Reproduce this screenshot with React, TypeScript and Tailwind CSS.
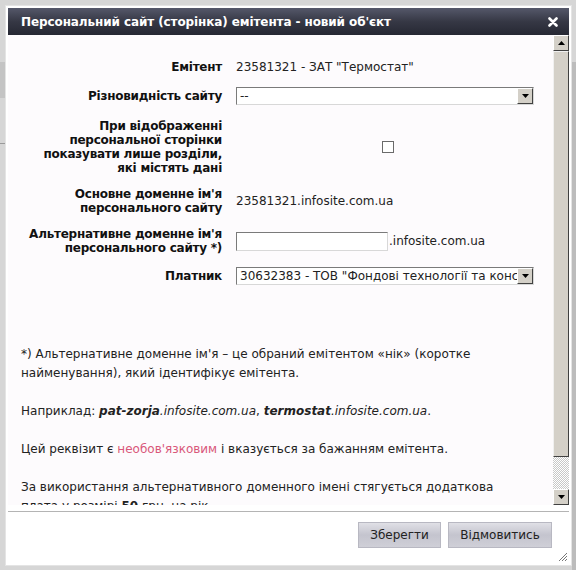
import React from 'react';

function SelectBox({ value, width }: { value: string; width: string }) {
  return (
    <div className={`${width} h-[18px] flex bg-white border border-[#7a7a7a] border-r-[#d8d8d8] border-b-[#d8d8d8]`}>
      <div className="flex-1 overflow-hidden whitespace-nowrap pl-[3px] text-[12px] leading-[16px] text-[#222]">{value}</div>
      <div className="w-[16px] h-[16px] bg-[#d4d0c8] border border-t-white border-l-white border-r-[#404040] border-b-[#404040] flex items-center justify-center">
        <svg width="7" height="4" viewBox="0 0 7 4"><path d="M0 0h7L3.5 4z" fill="#000" /></svg>
      </div>
    </div>
  );
}

function ScrollButton({ up }: { up?: boolean }) {
  return (
    <div className="w-[16px] h-[16px] bg-[#d4d0c8] border border-t-white border-l-white border-r-[#404040] border-b-[#404040] flex items-center justify-center shrink-0">
      <svg width="7" height="4" viewBox="0 0 7 4">
        <path d={up ? 'M0 4h7L3.5 0z' : 'M0 0h7L3.5 4z'} fill="#000" />
      </svg>
    </div>
  );
}

function FormRow({ label, children, className = '' }: { label: React.ReactNode; children: React.ReactNode; className?: string }) {
  return (
    <div className={`flex items-center ${className}`}>
      <div className="w-[214px] shrink-0 text-right font-bold text-[12px] leading-[14px] tracking-[-0.25px] text-[#111]">{label}</div>
      <div className="ml-[14px] flex-1 flex items-center text-[12px] text-[#222]">{children}</div>
    </div>
  );
}

export default function App() {
  return (
    <div className="w-[576px] h-[570px] bg-[#d6d6d6] overflow-hidden flex font-['DejaVu_Sans',sans-serif]">
      {/* page behind the dialog */}
      <div className="w-[5px] shrink-0 flex flex-col overflow-hidden">
        <div className="h-[62px]" />
        <div className="h-[36px] bg-[#c4c4c4]" />
        <div className="h-[46px] border-b border-[#9a9a9a]" />
      </div>

      <div className="mt-[5px] w-[567px] h-[561px] shrink-0 bg-white border border-[#e4e4e4] p-[2px] flex flex-col">
        {/* title bar */}
        <div className="h-[27px] shrink-0 flex items-center justify-between pl-[13px] pr-[11px] bg-gradient-to-b from-[#55586a] via-[#363845] to-[#262833]">
          <span className="text-white font-bold text-[12px] tracking-[-0.1px]">Персональний сайт (сторінка) емітента - новий об'єкт</span>
          <svg width="10" height="10" viewBox="0 0 10 10">
            <path d="M1.5 1.5l7 7M8.5 1.5l-7 7" stroke="#fff" strokeWidth="2.6" strokeLinecap="round" />
          </svg>
        </div>

        {/* scroll body */}
        <div className="h-[470px] shrink-0 flex">
          <div className="flex-1 overflow-hidden bg-[#fdfbfd]">
            <div className="pt-[23px]">
              <FormRow label="Емітент" className="h-[18px]">
                23581321 - ЗАТ "Термостат"
              </FormRow>
              <FormRow label="Різновидність сайту" className="mt-[11px] h-[18px]">
                <SelectBox value="--" width="w-[298px]" />
              </FormRow>
              <FormRow
                className="mt-[14px]"
                label={
                  <>
                    При відображенні
                    <br />
                    персональної сторінки
                    <br />
                    показувати лише розділи,
                    <br />
                    які містять дані
                  </>
                }
              >
                <div className="ml-[146px] w-[12px] h-[12px] bg-white border border-[#6a6a6a]" />
              </FormRow>
              <FormRow
                className="mt-[12px]"
                label={
                  <>
                    Основне доменне ім'я
                    <br />
                    персонального сайту
                  </>
                }
              >
                23581321.infosite.com.ua
              </FormRow>
              <FormRow
                className="mt-[12px]"
                label={
                  <>
                    Альтернативне доменне ім'я
                    <br />
                    персонального сайту *)
                  </>
                }
              >
                <div className="w-[152px] h-[19px] bg-white border border-[#7a7a7a] border-r-[#d8d8d8] border-b-[#d8d8d8]" />
                <span className="ml-[1px]">.infosite.com.ua</span>
              </FormRow>
              <FormRow label="Платник" className="mt-[11px] h-[19px]">
                <SelectBox value={'30632383 - ТОВ "Фондові технології та консалтинг"'} width="w-[298px]" />
              </FormRow>

              <div className="mt-[60px] pl-[13px] pr-[40px] text-[12px] leading-[19px] text-[#222]">
                <p>*) Альтернативне доменне ім'я – це обраний емітентом «нік» (коротке найменування), який ідентифікує емітента.</p>
                <p className="mt-[19px]">
                  Наприклад: <b className="italic">pat-zorja</b>
                  <i>.infosite.com.ua</i>, <b className="italic">termostat</b>
                  <i>.infosite.com.ua</i>.
                </p>
                <p className="mt-[19px]">
                  Цей реквізит є <span className="text-[#d9577a]">необов'язковим</span> і вказується за бажанням емітента.
                </p>
                <p className="mt-[19px]">
                  За використання альтернативного доменного імені стягується додаткова плата у розмірі <b>50</b> грн. на рік.
                </p>
              </div>
            </div>
          </div>

          {/* scrollbar */}
          <div className="w-[16px] shrink-0 flex flex-col">
            <ScrollButton up />
            <div className="h-[406px] bg-[#d4d0c8] border border-t-[#f0f0f0] border-l-[#f0f0f0] border-r-[#404040] border-b-[#404040]" />
            <div className="flex-1 bg-[repeating-conic-gradient(#c8c8c8_0_25%,#ffffff_0_50%)] bg-[length:2px_2px]" />
            <ScrollButton />
          </div>
        </div>

        {/* footer */}
        <div className="flex-1 mt-[6px] border-t border-[#b4b4b4] flex flex-col">
          <div className="flex justify-end gap-[7px] pt-[10px] pr-[17px]">
            <button className="w-[83px] h-[26px] text-[12px] text-[#222] border border-[#b8b8c2] bg-gradient-to-b from-[#e0e0e6] via-[#c4c4ce] to-[#cfcfd7]">
              Зберегти
            </button>
            <button className="w-[104px] h-[26px] text-[12px] text-[#222] border border-[#b8b8c2] bg-gradient-to-b from-[#e0e0e6] via-[#c4c4ce] to-[#cfcfd7]">
              Відмовитись
            </button>
          </div>
          <div className="mt-auto self-end mr-[1px] mb-[1px]">
            <svg width="12" height="12" viewBox="0 0 12 12">
              <path d="M11 3L3 11M11 6L6 11M11 9L9 11" stroke="#777" strokeWidth="1" />
            </svg>
          </div>
        </div>
      </div>

      <div className="flex-1 flex flex-col">
        <div className="h-[62px]" />
        <div className="flex-1 bg-[#bcbcbc]" />
      </div>
    </div>
  );
}
